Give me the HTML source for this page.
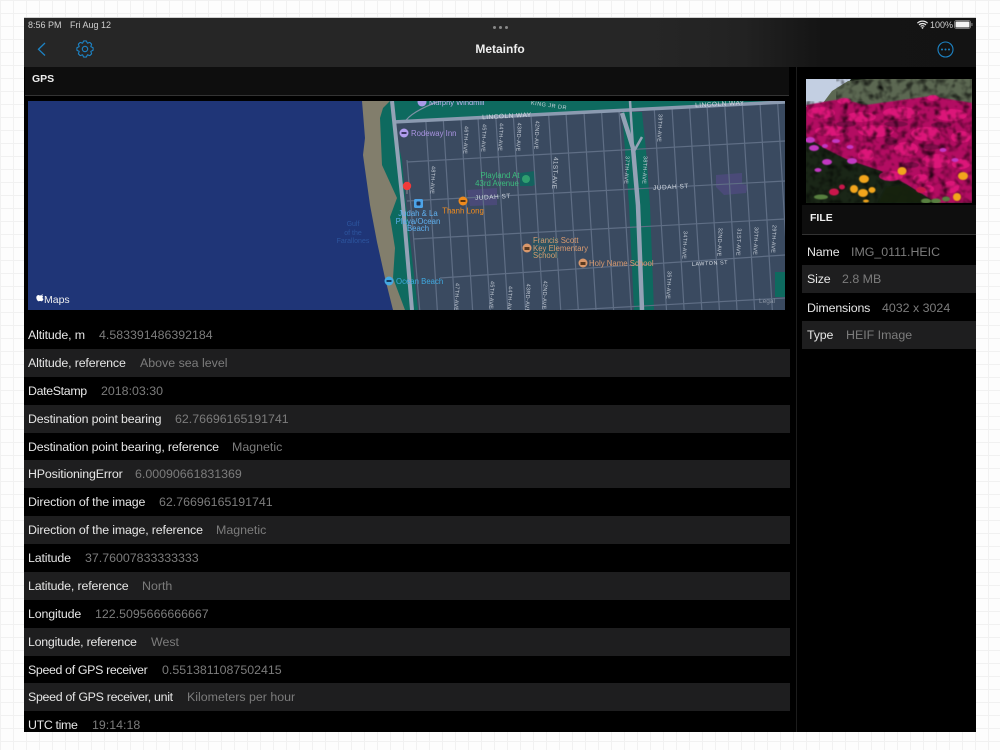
<!DOCTYPE html>
<html lang="en"><head><meta charset="utf-8"><title>Metainfo</title>
<style>
html,body{margin:0;padding:0;width:1000px;height:750px;overflow:hidden;background:#fff}
body{position:relative;font-family:"Liberation Sans",sans-serif;background-color:#fdfdfd;background-image:linear-gradient(#f1f1f1 1px,transparent 1px),linear-gradient(90deg,#f1f1f1 1px,transparent 1px);background-size:13px 13px}
#dev{position:absolute;left:24px;top:18px;width:952px;height:714px;background:#000;overflow:hidden;box-shadow:0 -1px 0 #cfcfcf}
#bar{position:absolute;left:0;top:0;width:952px;height:49px;background:linear-gradient(90deg,#262626 0,#262626 620px,#222 720px,#141414 800px,#131313 952px)}
.abs{position:absolute;white-space:nowrap}
.st{font-size:9px;color:#d0d0d0;top:2px;line-height:11px}
.hd{position:absolute;background:#0e0e0e;border-bottom:1px solid #333}
.hd b{position:absolute;font-size:10.500px;color:#eee;line-height:12px}
.r{position:absolute;height:28px;line-height:28px;font-size:12.400px;color:#e6e6e6;white-space:nowrap}
.r.g{background:#1e1e1f}
.r i{position:absolute;top:0;font-style:normal;color:#7c7c7c}
.r span{position:absolute;top:0;letter-spacing:-.15px}
svg{position:absolute;display:block}
</style></head><body>
<div id="dev">
<div id="bar"></div>
<div class="abs st" style="left:4px">8:56 PM</div>
<div class="abs st" style="left:46px">Fri Aug 12</div>
<div class="abs" style="left:469px;top:8px;width:3px;height:3px;border-radius:50%;background:#888"></div>
<div class="abs" style="left:475px;top:8px;width:3px;height:3px;border-radius:50%;background:#888"></div>
<div class="abs" style="left:481px;top:8px;width:3px;height:3px;border-radius:50%;background:#888"></div>
<svg style="left:893px;top:2px" width="11" height="9" viewBox="0 0 11 9"><path d="M.4 3.2a7.4 7.4 0 0 1 10.2 0M2 4.9a5 5 0 0 1 7 0M3.6 6.5a2.7 2.7 0 0 1 3.8 0" fill="none" stroke="#e8e8e8" stroke-width="1.2"/><path d="M5.5 9 4.3 7.7a1.7 1.7 0 0 1 2.4 0z" fill="#e8e8e8"/></svg>
<div class="abs st" style="left:906px">100%</div>
<svg style="left:930px;top:2px" width="19" height="10" viewBox="0 0 19 10"><rect x=".5" y=".5" width="16" height="8" rx="2" fill="none" stroke="#777"/><rect x="1.5" y="1.5" width="14" height="6" rx="1" fill="#f2f2f2"/><rect x="17.3" y="3" width="1.2" height="3" fill="#777"/></svg>
<svg style="left:11px;top:22px" width="14" height="18" viewBox="0 0 14 18"><path d="M10 3 3.500 9.300 10 15.500" fill="none" stroke="#1d83c4" stroke-width="1.300"/></svg>
<svg style="left:50px;top:20px" width="22" height="22" viewBox="-11 -11 22 22"><path d="M8.100-1.280 8.100 1.280 5.820 2.410 6.630 4.820 4.820 6.630 2.410 5.820 1.280 8.100-1.280 8.100-2.410 5.820-4.820 6.630-6.630 4.820-5.820 2.410-8.100 1.280-8.100-1.280-5.820-2.410-6.630-4.820-4.820-6.630-2.410-5.820-1.280-8.100 1.280-8.100 2.410-5.820 4.820-6.630 6.630-4.820 5.820-2.410Z" fill="none" stroke="#1d83c4" stroke-width="1.100" stroke-linejoin="round"/><circle r="2.700" fill="none" stroke="#1d83c4" stroke-width="1.100"/></svg>
<div class="abs" style="left:0;width:952px;top:23px;text-align:center;font-size:12px;font-weight:bold;color:#eee;line-height:16px">Metainfo</div>
<svg style="left:912px;top:22px" width="19" height="19" viewBox="0 0 19 19"><circle cx="9.500" cy="9.500" r="7.500" fill="none" stroke="#1d83c4" stroke-width="1.100"/><circle cx="6" cy="9.500" r="1" fill="#1d83c4"/><circle cx="9.500" cy="9.500" r="1" fill="#1d83c4"/><circle cx="13" cy="9.500" r="1" fill="#1d83c4"/></svg>

<div class="hd" style="left:1px;top:49px;width:764px;height:28px"><b style="left:7px;top:6px">GPS</b></div>
<div class="abs" style="left:772px;top:49px;width:1px;height:665px;background:#1c1c1c"></div>

<svg style="left:4px;top:83px" width="757" height="209" viewBox="28 101 757 209" font-family="Liberation Sans, sans-serif">
<rect x="28" y="101" width="757" height="209" fill="#1f3577"/>
<path d="M362 101 365 138 363 155 370 205 377 242 385 278 393 310H420V101Z" fill="#827e6c"/>
<path d="M383 108 380 118 382 165 397 198 390 217 395 248 393 278 405 310H425V101H390Z" fill="#0e6a5f"/>
<path d="M393 122 800 101V310H418L406 205 402 160Z" fill="#3a4a60"/>
<path d="M393 101H800V102L393 123Z" fill="#0e6a5f"/>
<path d="M622 112H642L646 150 650 205 654 310H634L629 205 625 150Z" fill="#0e6a5f"/>
<path d="M520 173 535 171 536 185 521 186Z" fill="#14635f"/>
<path d="M467 190 497 188 497 205 470 206Z" fill="#4a4a78"/>
<path d="M716 175 742 173 742 184 748 185 746 193 724 195 716 187Z" fill="#4a4a78"/>
<path d="M775 272H785V297H775Z" fill="#0e6a5f"/>
<g stroke="#5f6e85" stroke-width="1.200" fill="none">
<path d="M407 160 419.700 310M425.800 120 437.300 310M443.300 120 454.900 310M461 120 472.600 310M478 118 490.200 310M495.800 117 507.800 310M513.300 116 525.500 310M531 115 543.100 310M548.600 114 560.700 310M566 113 578.300 310M584 112 596 310M601.500 111 613.600 310M619 110 631.200 310M654.200 108 666.500 310M672 107 684.100 310M689.500 106 701.800 310M707 105 719.400 310M724.800 105 737 310M742.300 104 754.600 310M760 103 772.300 310M777.600 102 789.900 310"/>
<path d="M407 162 785 141M407 201 785 181M413 239 785 219M440 278 785 255M500 314 785 298"/>
</g>
<path d="M405 122C408 116 420 108 440 101" stroke="#8191a6" fill="none" stroke-width="1.200"/>
<path d="M393 122 785 102" stroke="#8b9ab0" stroke-width="3.500" fill="none"/>
<g fill="none" stroke="#94a2b6"><path d="M392 101 403 205 412 310" stroke-width="4"/><path d="M622 113 633 148 638 205 642 310" stroke-width="4.500"/><path d="M630 101 633 148M642 137 633 153" stroke-width="2.500"/></g>

<g fill="#c5ccd6" font-size="5.500" letter-spacing=".3" text-anchor="middle">
<text transform="translate(431 180) rotate(93)">48TH-AVE</text>
<text transform="translate(464 140) rotate(93)">46TH-AVE</text>
<text transform="translate(482 138) rotate(93)">45TH-AVE</text>
<text transform="translate(499 137) rotate(93)">44TH-AVE</text>
<text transform="translate(517 137) rotate(93)">43RD-AVE</text>
<text transform="translate(535 135) rotate(93)">42ND-AVE</text>
<text transform="translate(553 173) rotate(93)" font-size="6.500">41ST-AVE</text>
<text transform="translate(658 128) rotate(93)">39TH-AVE</text>
<text transform="translate(625 170) rotate(93)">37TH-AVE</text>
<text transform="translate(643 170) rotate(93)">38TH-AVE</text>
<text transform="translate(455 297) rotate(93)">47TH-AVE</text>
<text transform="translate(490 295) rotate(93)">45TH-AVE</text>
<text transform="translate(508 300) rotate(93)">44TH-AVE</text>
<text transform="translate(526 298) rotate(93)">43RD-AVE</text>
<text transform="translate(543 295) rotate(93)">42ND-AVE</text>
<text transform="translate(683 245) rotate(93)">34TH-AVE</text>
<text transform="translate(718 242) rotate(93)">32ND-AVE</text>
<text transform="translate(737 242) rotate(93)">31ST-AVE</text>
<text transform="translate(754 241) rotate(93)">30TH-AVE</text>
<text transform="translate(772 239) rotate(93)">29TH-AVE</text>
<text transform="translate(667 285) rotate(93)">35TH-AVE</text>
</g>
<g fill="#d3d9e1" font-size="6.500" letter-spacing=".5" text-anchor="middle">
<text transform="translate(507 118) rotate(-3)">LINCOLN WAY</text>
<text transform="translate(720 106) rotate(-3)">LINCOLN WAY</text>
<text transform="translate(493 199) rotate(-3)">JUDAH ST</text>
<text transform="translate(671 189) rotate(-3)">JUDAH ST</text>
<text transform="translate(710 265) rotate(-3)" font-size="5.500">LAWTON ST</text>
<text x="549" y="107" font-size="5.500" transform="rotate(8 549 105)">KING JR DR</text>
</g>
<text x="767" y="303" fill="#8a94a3" font-size="6.500" text-anchor="middle">Legal</text>

<circle cx="422" cy="102" r="4.500" fill="#a99ae8"/>
<text x="429" y="105" font-size="7.500" fill="#bdb4ee">Murphy Windmill</text>
<circle cx="404" cy="133" r="4.500" fill="#b09cec"/><rect x="401.500" y="132" width="5" height="2" fill="#3a3560"/>
<text x="411" y="136" font-size="7.800" fill="#a893e0">Rodeway Inn</text>
<g font-size="7.800" fill="#3bbd7d" text-anchor="middle"><text x="500" y="178">Playland At</text><text x="497" y="186">43rd Avenue</text></g>
<rect x="520" y="173" width="13" height="13" fill="#14635f"/><circle cx="526" cy="179" r="4" fill="#2f9f6f"/>
<circle cx="463" cy="201" r="4.500" fill="#ee8a1c"/><rect x="460.500" y="200" width="5" height="2" fill="#5a3510"/>
<text x="463" y="213.500" font-size="7.800" fill="#f08c1e" text-anchor="middle">Thanh Long</text>
<rect x="414" y="199" width="9" height="9" rx="1.500" fill="#4ca3e8"/><rect x="416.500" y="201.500" width="4" height="4" rx="1" fill="#1f3050"/>
<g font-size="7.800" fill="#5fb0ef" text-anchor="middle"><text x="418" y="216">Judah &amp; La</text><text x="418" y="224">Playa/Ocean</text><text x="418" y="231">Beach</text></g>
<g font-size="7" fill="#2d559e" text-anchor="middle"><text x="353" y="226">Gulf</text><text x="353" y="235">of the</text><text x="353" y="243">Farallones</text></g>
<circle cx="389" cy="281" r="4.500" fill="#45a9e2"/><rect x="386.500" y="280" width="5" height="2" fill="#123a60"/>
<text x="396" y="284" font-size="7.800" fill="#3fa9e0">Ocean Beach</text>
<rect x="532" y="238" width="26" height="20" fill="#1b5a60" opacity=".5"/>
<circle cx="527" cy="248" r="4.500" fill="#d9976a"/><rect x="524.500" y="247" width="5" height="3" fill="#5a3a20"/>
<g font-size="7.800" fill="#d89a70"><text x="533" y="243">Francis Scott</text><text x="533" y="251">Key Elementary</text><text x="533" y="258">School</text></g>
<circle cx="583" cy="263" r="4.500" fill="#d9976a"/><rect x="580.500" y="262" width="5" height="3" fill="#5a3a20"/>
<text x="589" y="266" font-size="7.800" fill="#d89a70">Holy Name School</text>
<circle cx="407" cy="186" r="4.200" fill="#f03a3a"/><path d="M407 190v4" stroke="#8b8b8b"/>
<path d="M40.500 295.500c.8-.2 1.300.1 1.800 0 .3-.8.800-1.300 1.400-1.400 0 .8-.5 1.200-1 1.500.7-.1 1.200.1 1.600.6-1.100.7-.9 2.300.2 2.800-.4 1.100-1.100 2.300-1.900 2.300-.6 0-.9-.3-1.500-.3s-.9.3-1.500.3c-1 0-2.300-2.300-2.300-3.800 0-1.500 1-2.400 2.200-2.500z" fill="#fff" transform="translate(-1 0)"/>
<text x="44" y="303" font-size="10.500" fill="#eee">Maps</text>
</svg>

<div class="r" style="left:0;top:303px;width:766px"><span style="left:4px">Altitude, m</span><i style="left:75px">4.583391486392184</i></div>
<div class="r g" style="left:0;top:331px;width:766px"><span style="left:4px">Altitude, reference</span><i style="left:116px">Above sea level</i></div>
<div class="r" style="left:0;top:358.700px;width:766px"><span style="left:4px;letter-spacing:-.35px">DateStamp</span><i style="left:77px">2018:03:30</i></div>
<div class="r g" style="left:0;top:386.600px;width:766px"><span style="left:4px">Destination point bearing</span><i style="left:151px">62.76696165191741</i></div>
<div class="r" style="left:0;top:414.500px;width:766px"><span style="left:4px">Destination point bearing, reference</span><i style="left:208px">Magnetic</i></div>
<div class="r g" style="left:0;top:442.400px;width:766px"><span style="left:4px">HPositioningError</span><i style="left:111px">6.00090661831369</i></div>
<div class="r" style="left:0;top:470.300px;width:766px"><span style="left:4px">Direction of the image</span><i style="left:135px">62.76696165191741</i></div>
<div class="r g" style="left:0;top:498.200px;width:766px"><span style="left:4px">Direction of the image, reference</span><i style="left:192px">Magnetic</i></div>
<div class="r" style="left:0;top:526px;width:766px"><span style="left:4px">Latitude</span><i style="left:61px">37.76007833333333</i></div>
<div class="r g" style="left:0;top:553.900px;width:766px"><span style="left:4px">Latitude, reference</span><i style="left:118px">North</i></div>
<div class="r" style="left:0;top:581.800px;width:766px"><span style="left:4px">Longitude</span><i style="left:71px">122.5095666666667</i></div>
<div class="r g" style="left:0;top:609.700px;width:766px"><span style="left:4px;letter-spacing:-.25px">Longitude, reference</span><i style="left:127px">West</i></div>
<div class="r" style="left:0;top:637.600px;width:766px"><span style="left:4px;letter-spacing:-.35px">Speed of GPS receiver</span><i style="left:138px">0.5513811087502415</i></div>
<div class="r g" style="left:0;top:665.400px;width:766px"><span style="left:4px;letter-spacing:-.3px">Speed of GPS receiver, unit</span><i style="left:163px">Kilometers per hour</i></div>
<div class="r" style="left:0;top:693.300px;width:766px"><span style="left:4px;letter-spacing:-.35px">UTC time</span><i style="left:68px">19:14:18</i></div>

<svg style="left:782px;top:61px" width="166" height="124" viewBox="0 0 166 124">
<defs>
<filter id="n" x="0" y="0" width="100%" height="100%" color-interpolation-filters="sRGB"><feTurbulence type="fractalNoise" baseFrequency=".14" numOctaves="2" seed="7"/><feColorMatrix values="0 0 0 0 0 0 0 0 0 0 0 0 0 0 0 1.200 1.200 0 0 -1.100"/><feGaussianBlur stdDeviation=".6"/></filter>
<filter id="b"><feGaussianBlur stdDeviation=".6"/></filter>
</defs>
<rect width="166" height="124" fill="#1a2617"/>
<path d="M0 0H45L25 28H0Z" fill="#c3cfe2"/>
<path d="M14 28 26 12 42 2 60 0H166V30H14Z" fill="#5c6852"/>
<g filter="url(#b)">
<path d="M0 26 35 20 60 26 125 17 166 24V124H130L118 116 100 105 75 92 40 80 20 70 0 58Z" fill="#b30a62"/>
<g fill="#dc1479">
<ellipse cx="38" cy="22" rx="7" ry="3"/><ellipse cx="127" cy="19" rx="6" ry="3"/><ellipse cx="15" cy="34" rx="14" ry="6"/><ellipse cx="55" cy="38" rx="15" ry="5"/><ellipse cx="95" cy="34" rx="18" ry="6"/><ellipse cx="145" cy="36" rx="16" ry="6"/><ellipse cx="25" cy="52" rx="16" ry="5"/><ellipse cx="70" cy="52" rx="18" ry="6"/><ellipse cx="120" cy="55" rx="15" ry="7"/><ellipse cx="155" cy="58" rx="10" ry="6"/><ellipse cx="100" cy="70" rx="12" ry="7"/><ellipse cx="60" cy="76" rx="8" ry="6"/><ellipse cx="130" cy="82" rx="14" ry="7"/><ellipse cx="85" cy="97" rx="12" ry="5"/><ellipse cx="155" cy="85" rx="9" ry="5"/><ellipse cx="115" cy="100" rx="8" ry="5"/><ellipse cx="145" cy="108" rx="8" ry="6"/><ellipse cx="122" cy="110" rx="6" ry="4"/>
</g>
<g fill="#7d0748"><ellipse cx="40" cy="45" rx="10" ry="3"/><ellipse cx="90" cy="45" rx="12" ry="3"/><ellipse cx="135" cy="46" rx="10" ry="3"/><ellipse cx="85" cy="62" rx="6" ry="4"/><ellipse cx="125" cy="68" rx="9" ry="3"/><ellipse cx="105" cy="86" rx="8" ry="3"/></g>
</g>
<rect x="30" y="0" width="136" height="22" filter="url(#n)"/>
<rect y="22" width="166" height="102" filter="url(#n)"/>
<path d="M100 106 118 118 130 124H72L80 108Z" fill="#14200f" opacity=".9" filter="url(#b)"/>
<g filter="url(#b)">
<g fill="#c338c2"><ellipse cx="4" cy="61" rx="5" ry="3"/><ellipse cx="8" cy="69" rx="5" ry="3"/><ellipse cx="21" cy="83" rx="5" ry="3"/><ellipse cx="46" cy="82" rx="5" ry="3"/><ellipse cx="30" cy="62" rx="4" ry="2"/><ellipse cx="44" cy="68" rx="3.500" ry="2"/><ellipse cx="19" cy="67" rx="3" ry="2"/><ellipse cx="149" cy="81" rx="3.500" ry="2"/><ellipse cx="137" cy="71" rx="3.500" ry="2"/><ellipse cx="12" cy="91" rx="3.500" ry="2"/></g>
<g fill="#f2a51c"><ellipse cx="96" cy="92" rx="4.500" ry="4"/><ellipse cx="58" cy="100" rx="5" ry="4"/><ellipse cx="48" cy="110" rx="4" ry="4"/><ellipse cx="57" cy="114" rx="5" ry="4"/><ellipse cx="66" cy="111" rx="3.500" ry="3"/><ellipse cx="157" cy="97" rx="5" ry="4"/><ellipse cx="151" cy="118" rx="4" ry="4"/><ellipse cx="60" cy="122" rx="3" ry="1.500"/></g>
<g fill="#c9174c"><ellipse cx="28" cy="113" rx="5" ry="3.500"/><ellipse cx="36" cy="108" rx="3" ry="2.500"/><ellipse cx="115" cy="111" rx="5" ry="3"/></g>
<g fill="#58803f"><ellipse cx="15" cy="118" rx="7" ry="2.500"/><ellipse cx="120" cy="122" rx="5" ry="2.500"/><ellipse cx="130" cy="122" rx="5" ry="2.500"/><ellipse cx="140" cy="120" rx="4" ry="2.500"/></g>
</g>
</svg>

<div class="hd" style="left:778px;top:187px;width:174px;height:29px"><b style="left:8px;top:7px">FILE</b></div>
<div class="r" style="left:778px;top:220px;width:174px"><span style="left:5px">Name</span><i style="left:49px">IMG_0111.HEIC</i></div>
<div class="r g" style="left:778px;top:247px;width:174px;line-height:29px"><span style="left:5px">Size</span><i style="left:40px">2.8 MB</i></div>
<div class="r" style="left:778px;top:275.500px;width:174px"><span style="left:5px">Dimensions</span><i style="left:80px">4032 x 3024</i></div>
<div class="r g" style="left:778px;top:303px;width:174px;line-height:29px"><span style="left:5px">Type</span><i style="left:44px">HEIF Image</i></div>
</div>
</body></html>
